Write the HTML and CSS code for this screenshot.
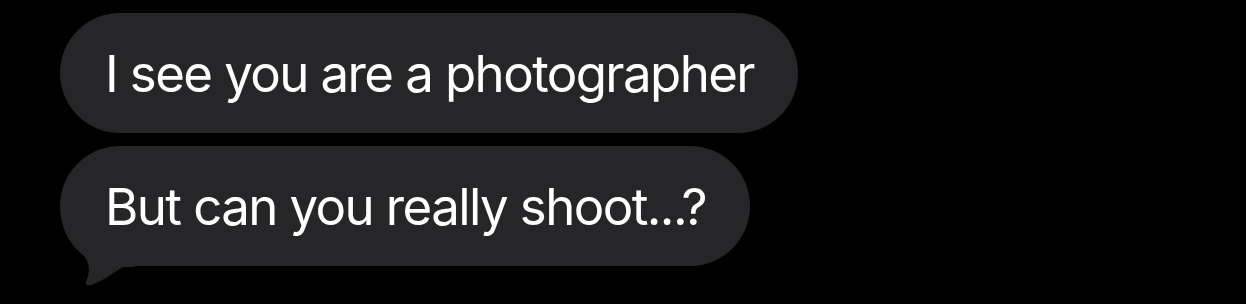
FILE: index.html
```html
<!DOCTYPE html>
<html lang="en">
<head>
    <meta charset="UTF-8">
    <meta name="viewport" content="width=device-width, initial-scale=1.0">
    <title>Messages</title>
    <link rel="stylesheet" href="styles.css">
</head>
<body>
    <div class="thread">
        <div class="bubble"><span class="text">I see you are a photographer</span></div>
        <div class="bubble">
            <span class="text">But can you really shoot...?</span>
            <svg class="tail" width="80" height="75" viewBox="0 0 80 75">
                <path d="M6 0 C8 20 18 32 28 40 C34 46 36 56 31 67 C30 70 33 71 36 70 C48 66 58 58 68 52 L80 52 L80 0 Z" fill="#262628"/>
            </svg>
        </div>
    </div>
</body>
</html>
```

FILE: styles.css
```css
body {
    margin: 0;
    height: 100vh;
    background: #000;
    font-family: Inter, "Noto Sans", sans-serif;
}
.thread {
    display: flex;
    flex-direction: column;
    align-items: flex-start;
    gap: 13px;
    padding: 13px 0 0 60px;
}
.bubble {
    position: relative;
    display: flex;
    align-items: center;
    height: 120px;
    padding: 0 44px 0 45px;
    border-radius: 60px;
    background: #262628;
    color: #fff;
    font-size: 51px;
    letter-spacing: -1.6px;
    white-space: nowrap;
}
.text {
    position: relative;
    z-index: 1;
}
.tail {
    position: absolute;
    left: -5px;
    bottom: -24px;
}
```
